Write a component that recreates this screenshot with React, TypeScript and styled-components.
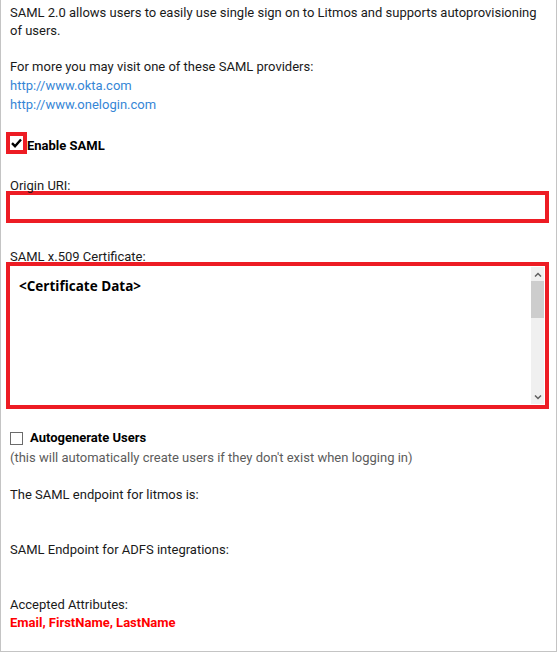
import styled, { createGlobalStyle } from "styled-components";

const GlobalStyle = createGlobalStyle`
  html, body {
    margin: 0;
    padding: 0;
    background: #ffffff;
  }
`;

const Frame = styled.div`
  box-sizing: border-box;
  width: 557px;
  height: 652px;
  border: 1px solid #c4c4c4;
  border-top: none;
  padding: 4px 0 0 9px;
  font-family: Roboto, "Liberation Sans", sans-serif;
  font-size: 13px;
  line-height: 18px;
  color: #1a1a1a;
`;

const Intro = styled.p`
  margin: 0;
`;

const LinkList = styled.div`
  display: flex;
  flex-direction: column;
  line-height: 19px;
`;

const Link = styled.a`
  color: #3686d6;
  text-decoration: none;
`;

const CheckRow = styled.label<{ $top: number }>`
  display: flex;
  align-items: center;
  margin-top: ${(p) => p.$top}px;
  font-weight: 700;
  color: #000;
`;

const CheckText = styled.span<{ $drop?: number }>`
  padding-top: ${(p) => p.$drop ?? 0}px;
`;

const Highlight = styled.span`
  display: flex;
  align-items: center;
  justify-content: center;
  box-sizing: border-box;
  width: 21px;
  height: 22px;
  margin-left: -4px;
  border: 4px solid #ed1c24;
  background: #fff;
`;

const Box = styled.span`
  display: inline-flex;
  box-sizing: border-box;
  width: 13px;
  height: 13px;
  border: 1px solid #6b6b6b;
  background: #fff;
  margin-right: 7px;
`;

const FieldLabel = styled.div<{ $top: number }>`
  margin-top: ${(p) => p.$top}px;
  line-height: 10px;
`;

const RedField = styled.div<{ $height: number }>`
  display: flex;
  box-sizing: border-box;
  width: 543px;
  height: ${(p) => p.$height}px;
  margin-left: -4px;
  border: 4px solid #ed1c24;
  background: #fff;
`;

const CertText = styled.div`
  flex: 1;
  padding: 11px 0 0 9px;
  font-family: "Open Sans", "DejaVu Sans", sans-serif;
  font-weight: 700;
  font-size: 13.5px;
  color: #000;
`;

const Scrollbar = styled.div`
  display: flex;
  flex-direction: column;
  width: 13px;
  margin: 1px 1px 1px 0;
  background: #f0f0f0;
`;

const ScrollArrow = styled.div`
  display: flex;
  align-items: center;
  justify-content: center;
  height: 14px;
`;

const Thumb = styled.div`
  height: 37px;
  background: #cdcdcd;
`;

const ScrollTrack = styled.div`
  flex: 1;
`;

const Note = styled.div`
  margin-top: 2px;
  color: #5c5c5c;
`;

const Line = styled.div<{ $top: number; $height?: number }>`
  margin-top: ${(p) => p.$top}px;
  line-height: ${(p) => p.$height ?? 18}px;
`;

const Attributes = styled.div`
  margin-top: 1px;
  font-weight: 700;
  color: #ff0000;
`;

const Check = () => (
  <svg width="11" height="10" viewBox="0 0 11 10">
    <path d="M1 5.2 L4 8.2 L10 1.5" fill="none" stroke="#000" strokeWidth="2.4" />
  </svg>
);

const Chevron = ({ up }: { up?: boolean }) => (
  <svg width="8" height="5" viewBox="0 0 8 5">
    <path
      d={up ? "M1 4.5 L4 1.5 L7 4.5" : "M1 0.5 L4 3.5 L7 0.5"}
      fill="none"
      stroke="#606060"
      strokeWidth="1.5"
    />
  </svg>
);

export default function App() {
  return (
    <>
      <GlobalStyle />
      <Frame>
        <Intro>
          SAML 2.0 allows users to easily use single sign on to Litmos and supports autoprovisioning
          <br />
          of users.
          <br />
          <br />
          For more you may visit one of these SAML providers:
        </Intro>
        <LinkList>
          <Link href="#">http://www.okta.com</Link>
          <Link href="#">http://www.onelogin.com</Link>
        </LinkList>

        <CheckRow $top={17}>
          <Highlight>
            <Check />
          </Highlight>
          <CheckText $drop={6}>Enable SAML</CheckText>
        </CheckRow>

        <FieldLabel $top={26}>Origin URI:</FieldLabel>
        <RedField $height={32} />

        <FieldLabel $top={29}>SAML x.509 Certificate:</FieldLabel>
        <RedField $height={147}>
          <CertText>&lt;Certificate Data&gt;</CertText>
          <Scrollbar>
            <ScrollArrow>
              <Chevron up />
            </ScrollArrow>
            <Thumb />
            <ScrollTrack />
            <ScrollArrow>
              <Chevron />
            </ScrollArrow>
          </Scrollbar>
        </RedField>

        <CheckRow $top={20}>
          <Box />
          <CheckText>Autogenerate Users</CheckText>
        </CheckRow>
        <Note>(this will automatically create users if they don't exist when logging in)</Note>

        <Line $top={19}>The SAML endpoint for litmos is:</Line>
        <Line $top={37}>SAML Endpoint for ADFS integrations:</Line>
        <Line $top={38} $height={16}>
          Accepted Attributes:
        </Line>
        <Attributes>Email, FirstName, LastName</Attributes>
      </Frame>
    </>
  );
}
